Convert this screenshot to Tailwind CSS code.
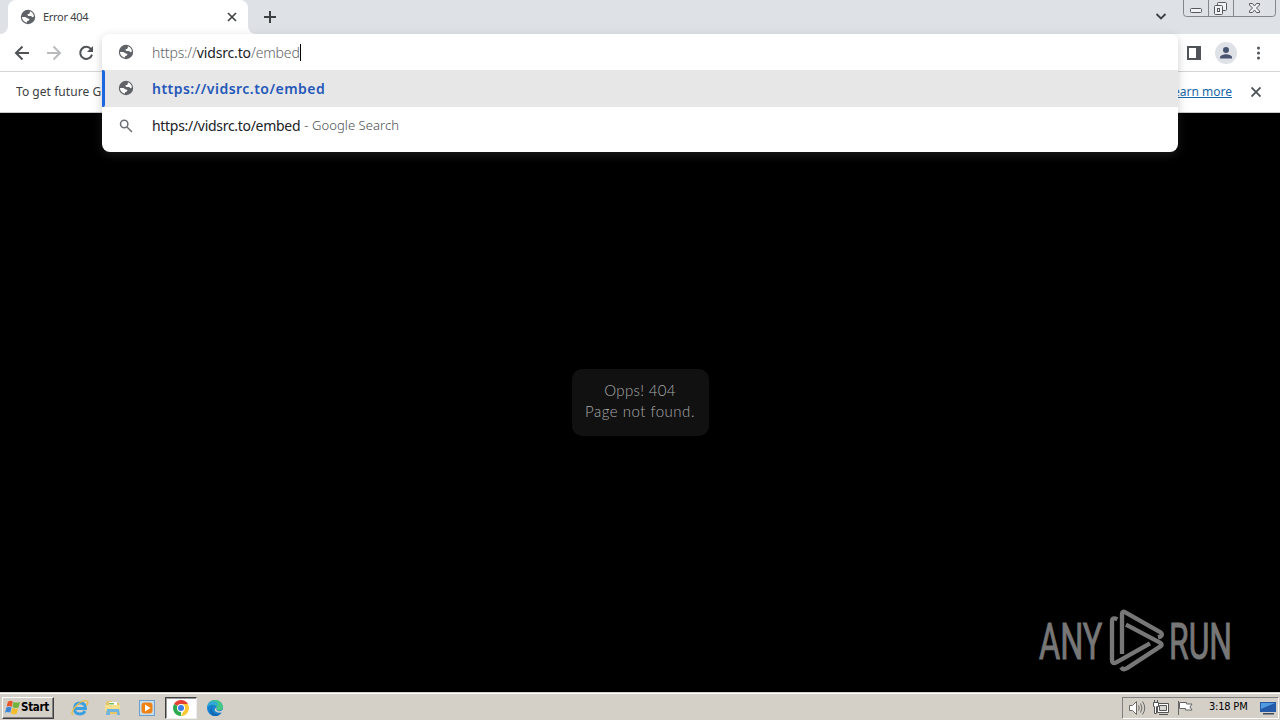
<!DOCTYPE html>
<html lang="en">
<head>
    <meta charset="UTF-8">
    <meta name="viewport" content="width=device-width, initial-scale=1.0">
    <title>Error 404</title>
    <script src="https://cdn.jsdelivr.net/npm/@tailwindcss/browser@4"></script>
</head>
<body class="w-[1280px] h-[720px] overflow-hidden bg-black">
    <svg class="hidden">
        <symbol id="globe" viewBox="0 0 16 16">
            <circle cx="8" cy="8" r="7.2" fill="#5f6368"/>
            <path fill="#fff" d="M9.8 2.300 C12.200 3 13.900 5 13.900 7.400 L12.500 8.200 L11 7 H8.600 L7.600 6.200 V5 H9 L9.900 3.800z M2 8.100 L5.400 7.900 L7.800 9.400 L9.600 10.100 L8.500 11.800 L7.300 12.100 L6.600 13.700 C3.800 13.100 2 10.800 2 8.100z"/>
        </symbol>
    </svg>

    <div class="relative flex flex-col w-full h-full font-['Noto_Sans','Open_Sans',sans-serif]">
        <!-- Tab strip -->
        <div class="flex h-[34px] shrink-0 bg-[#dee1e6]">
            <div class="w-2 bg-white"><div class="h-full bg-[#dee1e6] rounded-br-lg"></div></div>
            <div class="flex items-center w-[240px] bg-white rounded-t-lg pl-3 pr-[11px]">
                <svg class="w-4 h-4"><use href="#globe"/></svg>
                <span class="ml-[7px] text-[11px] text-[#3c4043] tracking-[-0.3px] grow">Error 404</span>
                <svg class="w-[10px] h-[10px]" viewBox="0 0 10 10" stroke="#3c4043" stroke-width="1.6"><path d="M1 1l8 8M9 1l-8 8"/></svg>
            </div>
            <div class="w-2 bg-white"><div class="h-full bg-[#dee1e6] rounded-bl-lg"></div></div>
            <svg class="w-3 h-3 mt-[11px] ml-2" viewBox="0 0 12 12" stroke="#3c4043" stroke-width="2"><path d="M6 0v12M0 6h12"/></svg>
            <div class="grow"></div>
            <svg class="w-3 h-[7px] mt-[13px] mr-4" viewBox="0 0 12 7" fill="none" stroke="#3c4043" stroke-width="1.8"><path d="M1.5 1L6 5.5 10.5 1"/></svg>
            <svg class="w-[93px] h-[17px] mr-1" viewBox="0 0 93 17" fill="none" stroke="#83868b">
                <path d="M.5 0v13.500q0 3 3 3h86q3 0 3-3V0M25.500 0v16M50.500 0v16"/>
                <g stroke="#55585f" fill="#f1f2f4">
                    <rect x="7.500" y="8.500" width="11" height="4" rx="1"/>
                    <rect x="34.500" y="2.500" width="9" height="8" rx="1"/>
                    <rect x="31.500" y="5.500" width="8" height="9" rx="1"/>
                    <rect x="34.500" y="8.500" width="2" height="3"/>
                    <path d="M66.500 3.500h3l2 2.500 2-2.500h3v1.500l-3 3 3 3v1.500h-3l-2-2.500-2 2.500h-3v-1.500l3-3-3-3z"/>
                </g>
            </svg>
        </div>

        <!-- Toolbar -->
        <div class="flex items-center h-[38px] shrink-0 bg-white border-b border-[#d2d4d8] pl-[14px] pr-[13px]">
            <svg class="w-4 h-4" viewBox="0 0 16 16" fill="none" stroke="#505357" stroke-width="2"><path d="M15 8H2M8.500 1.500L2 8l6.500 6.500"/></svg>
            <svg class="w-4 h-4 ml-4" viewBox="0 0 16 16" fill="none" stroke="#b9bbbe" stroke-width="2"><path d="M1 8h13M7.500 1.500L14 8l-6.500 6.500"/></svg>
            <svg class="w-4 h-4 ml-4" viewBox="0 0 16 16"><path d="M13 4.200A6 6 0 1 0 14 9.600" fill="none" stroke="#505357" stroke-width="2"/><path d="M15 1v6H9z" fill="#505357"/></svg>
            <div class="grow"></div>
            <svg class="w-[14px] h-[14px]" viewBox="0 0 14 14"><path fill="#505357" fill-rule="evenodd" d="M0 0h14v14H0zM2 2v10h7V2z"/></svg>
            <svg class="w-[22px] h-[22px] ml-[14px]" viewBox="0 0 22 22"><circle cx="11" cy="11" r="11" fill="#dee1e6"/><g fill="#47536f"><circle cx="11" cy="8" r="3"/><path d="M5 16.500v-1.200c0-2 4-3 6-3s6 1 6 3v1.200z"/></g></svg>
            <svg class="w-4 h-4 ml-[14px]" viewBox="0 0 16 16" fill="#505357"><circle cx="7.500" cy="3" r="1.500"/><circle cx="7.500" cy="8" r="1.500"/><circle cx="7.500" cy="13" r="1.500"/></svg>
        </div>

        <!-- Infobar -->
        <div class="flex items-center h-[41px] shrink-0 bg-white border-b border-[#c9cacc] pl-4 pr-[19px] text-[12px] text-[#3c4043]">
            <span class="w-[86px] overflow-hidden whitespace-nowrap tracking-[0.05px]">To get future G</span>
            <div class="grow"></div>
            <a class="text-[#1967a8] underline mr-[19px]" href="#">Learn more</a>
            <svg class="w-[10px] h-[10px]" viewBox="0 0 10 10" stroke="#505357" stroke-width="1.900"><path d="M.5.5l9 9M9.500.5l-9 9"/></svg>
        </div>

        <!-- Page -->
        <div class="relative grow flex items-center justify-center">
            <div class="w-[137px] h-[67px] rounded-[10px] bg-[#111] pt-[11px] text-center text-[15px] leading-[21px] font-light text-[#aaa] font-['Lato','Open_Sans',sans-serif]">
                <p class="tracking-[0.300px]">Opps! 404</p>
                <p class="tracking-[0.500px]">Page not found.</p>
            </div>
            <svg class="absolute right-10 bottom-[12px] w-[210px] h-20 overflow-visible" viewBox="0 0 630 240">
                <g fill="#777" stroke="#777" stroke-width="3" font-family="Roboto, sans-serif" font-size="152">
                    <text x="27" y="177" textLength="190" lengthAdjust="spacingAndGlyphs">ANY</text>
                    <text x="417" y="177" textLength="189" lengthAdjust="spacingAndGlyphs">RUN</text>
                </g>
                <g fill="none" stroke="#777" stroke-width="13" stroke-linejoin="round">
                    <path d="M276 162V42Q276 32 286 37L392 97Q400 104 391 110L384 112"/>
                    <path d="M288 74L390 128Q400 134 390 140L290 205Q280 212 273 202"/>
                    <path d="M262 58Q246 50 246 65V180Q246 194 259 187L360 130"/>
                </g>
            </svg>
        </div>

        <!-- Taskbar -->
        <div class="flex items-center h-[28px] shrink-0 bg-[#d4d0c8] border-t border-[#d4d0c8] shadow-[inset_0_1px_0_#fff] pt-[2px] font-['DejaVu_Sans_Condensed','DejaVu_Sans',sans-serif]">
            <div class="flex items-center w-[52px] h-[22px] ml-[2px] pl-[2px] border border-t-white border-l-white border-b-[#404040] border-r-[#404040] shadow-[inset_-1px_-1px_0_#808080]">
                <svg class="w-[15px] h-[15px] shrink-0" viewBox="0 0 16 16">
                    <path fill="#e8562a" d="M3 2Q5.500 0 8.300 1.500L7.200 7.200Q4.500 5.500 1.800 7z"/>
                    <path fill="#72b33b" d="M9 2Q12 3.500 16 2L14.500 8Q11 9 8 7.500z"/>
                    <path fill="#3f86d9" d="M1.500 8Q4 6.500 7 8L5.500 13.500Q3 12 0 13.500z"/>
                    <path fill="#f5bd2c" d="M7.800 8.500Q10.500 10 14 8.800L12.500 14.500Q9 16 6.300 14z"/>
                </svg>
                <span class="text-[11.500px] font-bold text-black tracking-[-0.3px] ml-px">Start</span>
            </div>
            <!-- Internet Explorer -->
            <svg class="w-[18px] h-[18px] ml-[17px]" viewBox="0 0 18 18" fill="none">
                <path d="M3.500 9.500H14.500Q14.500 4 9 4Q3.500 4 3.500 9.500Q3.500 15 9 15Q12.500 15 14 12" stroke="#3b9fe0" stroke-width="2.800"/>
                <path d="M2 16Q-1 14 5 7Q12 0 16 2Q18 3 15.500 6.500" stroke="#e8bd48" stroke-width="1.300"/>
            </svg>
            <!-- Explorer -->
            <svg class="w-4 h-4 ml-4" viewBox="0 0 16 16">
                <path fill="#e5c766" d="M1 3l1-2h5l1 2h6v11H1z"/><path fill="#fff" d="M4 2h8v4H4z"/><path fill="#79bb58" d="M4 3h5v1.500H4z"/>
                <path fill="#f6df8d" d="M0 5h15v6H0z"/><path fill="#70b5df" d="M2 9h12l1 6h-3v-3H5v3H1z"/>
            </svg>
            <!-- Media player -->
            <svg class="w-4 h-4 ml-[18px]" viewBox="0 0 16 16">
                <rect x=".5" y=".5" width="15" height="15" fill="#c6def1" stroke="#6d9fce"/><rect x="2.500" y="2.500" width="11" height="11" rx="3" fill="#ee8214"/><path fill="#fff" d="M6 4.500L11.500 8 6 11.500z"/>
            </svg>
            <div class="flex items-center justify-center w-[32px] h-[22px] ml-[10px] bg-white border border-t-[#404040] border-l-[#404040] border-b-[#eee] border-r-[#eee] shadow-[inset_1px_1px_0_#999]">
                <svg class="w-4 h-4" viewBox="0 0 16 16">
                    <path fill="#e34133" d="M8 8L1.100 4A8 8 0 0 1 14.900 4z"/><path fill="#2da94f" d="M8 8L8 16A8 8 0 0 1 1.100 4z"/><path fill="#fcc934" d="M8 4h6.900A8 8 0 0 1 8 16L11 10z"/>
                    <circle cx="8" cy="8" r="4" fill="#fff"/><circle cx="8" cy="8" r="3" fill="#3c7de6"/>
                </svg>
            </div>
            <!-- Edge -->
            <svg class="w-4 h-4 ml-[10px]" viewBox="0 0 16 16">
                <circle cx="8" cy="8" r="8" fill="#1683d0"/><path fill="#45c982" d="M1 5Q4-1 10 .3Q16 2 16 8Q15 11 11 10.500Q9.500 10 10 8.500Q10 5 6 4.500Q3 4 1 5z"/><path fill="#2fa9dc" d="M.3 7Q2 .5 8 1.500Q12 3 11 6Q8 3.500 5 4.500Q2 5 .3 7z"/><path fill="#d4d0c8" d="M9.800 7.500Q8.500 10 11 11Q14 11.800 16 9.500V12Q11 14 8 11Q7 8.500 9.800 7.500z"/><path fill="#1469b4" d="M5 6Q3.500 10 7 13Q10 15 14 13Q10 18 5 15.200Q1 11 5 6z"/>
            </svg>
            <div class="grow"></div>
            <div class="flex items-center w-[157px] h-[22px] mr-px pl-[6px] border border-t-[#808080] border-l-[#808080] border-b-white border-r-white">
                <svg class="w-[17px] h-4" viewBox="0 0 17 16" fill="none" stroke="#6b6b68">
                    <path fill="#fff" d="M.5 5.500h3l4-4v13l-4-4h-3z"/><path d="M9.500 5.500q1.500 2.500 0 5M11.500 3.500q3 4.500 0 9M13.500 1.500q4.500 6.500 0 13"/>
                </svg>
                <svg class="w-4 h-4 ml-[7px]" viewBox="0 0 16 16" fill="#fff" stroke="#555">
                    <path d="M4.500 3.500h11v9h-11zM6 14.500h9"/><path fill="#d7d7d3" d="M6.500 5.500h7v5h-7z"/><path d="M.5 2.500h5v4h-2v7h-2V6.500h-1zM1.500 0v2.500M4.500 0v2.500"/>
                </svg>
                <svg class="w-4 h-4 ml-[8px]" viewBox="0 0 16 16" fill="#fff" stroke="#666">
                    <path d="M1.500 1v14M2.500 2.500h7v1.500h5.500l-2 3 2 3H8.500V8.500h-6z"/>
                </svg>
                <span class="text-[11px] tracking-[-0.2px] text-black ml-[16px] whitespace-nowrap">3:18 PM</span>
                <svg class="w-4 h-4 ml-auto mr-[2px]" viewBox="0 0 16 16">
                    <path fill="#245aa8" d="M0 2h16v10H0z"/><path fill="#4e9be0" d="M1 3h14L1 9z"/><path fill="#3d4b5a" d="M3 13h11v1.500H3z"/>
                </svg>
            </div>
        </div>

        <!-- Omnibox with suggestions -->
        <div class="absolute left-[102px] top-[34px] w-[1076px] h-[118px] rounded-lg shadow-[0_3px_10px_rgba(90,90,90,0.3)]">
            <div class="w-full h-full bg-white rounded-lg overflow-hidden text-[14px] text-[#202124]">
                <div class="flex items-center h-[36px] pl-4">
                    <svg class="w-4 h-4"><use href="#globe"/></svg>
                    <span class="ml-[18px] font-light tracking-[-0.15px] text-[#5f6368]">https://<span class="text-[#202124] font-normal">vidsrc.to</span>/embed</span>
                    <span class="w-px h-[17px] bg-black"></span>
                </div>
                <div class="flex items-center h-[37px] bg-[#e7e7e8]">
                    <div class="w-[3px] h-full bg-[#1a67e0] rounded-r-[2px]"></div>
                    <svg class="w-4 h-4 ml-[13px] mb-px"><use href="#globe"/></svg>
                    <span class="ml-[18px] font-semibold tracking-[0.48px] text-[#2558b8]">https://vidsrc.to/embed</span>
                </div>
                <div class="flex items-center h-[37px] pl-4">
                    <svg class="w-4 h-4" viewBox="0 0 16 16" fill="none" stroke="#6b6e72" stroke-width="1.500"><circle cx="6.200" cy="6" r="3.700"/><path d="M9 9l5 5"/></svg>
                    <span class="ml-[18px] tracking-[-0.3px]">https://vidsrc.to/embed</span>
                    <span class="ml-1 text-[13px] tracking-[0.08px] font-light text-[#4b4f53]">- Google Search</span>
                </div>
            </div>
        </div>
    </div>
</body>
</html>
